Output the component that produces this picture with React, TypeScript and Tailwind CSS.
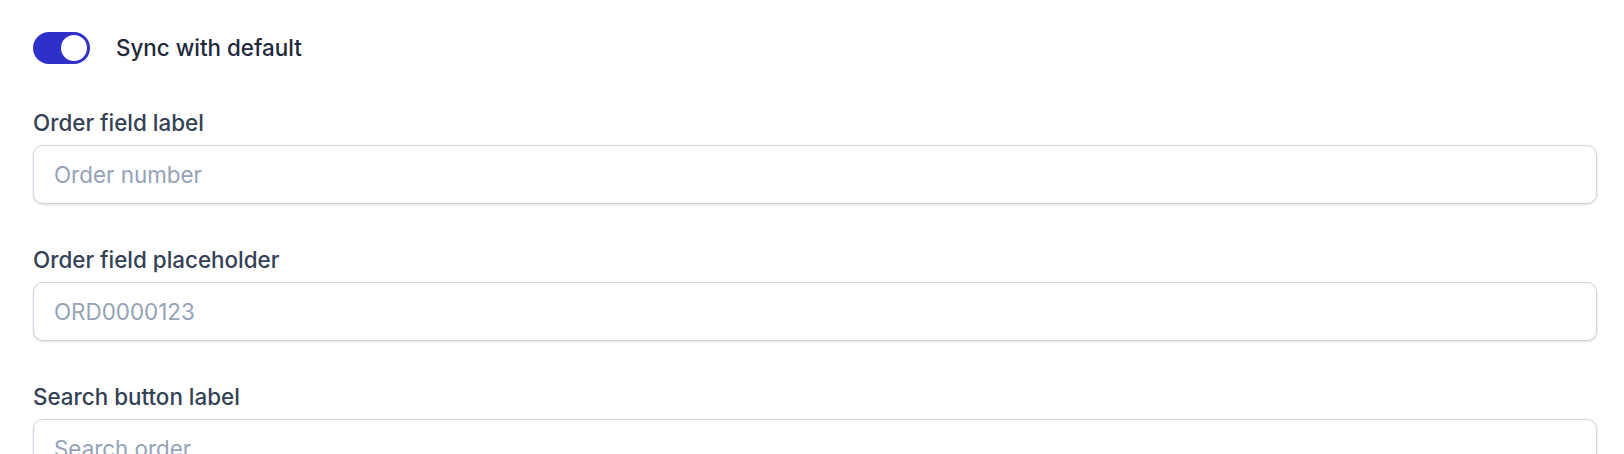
import React from "react";

const fields = [
  { label: "Order field label", placeholder: "Order number" },
  { label: "Order field placeholder", placeholder: "ORD0000123" },
  { label: "Search button label", placeholder: "Search order" },
];

export default function App() {
  return (
    <div
      className="min-h-screen w-full bg-white pl-[33px] pr-[27px] pt-[32px]"
      style={{ fontFamily: "Inter, 'Noto Sans', sans-serif" }}
    >
      <div className="flex items-center gap-[26px]">
        <button
          type="button"
          className="flex h-[32px] w-[57px] items-center justify-end rounded-full bg-[#2f2fc9] px-[3px]"
        >
          <span className="block h-[26px] w-[26px] rounded-full bg-white" />
        </button>
        <span className="text-[22.4px] font-medium leading-[32px] text-[#1e293b]">
          Sync with default
        </span>
      </div>
      <div className="mt-[44px] flex flex-col gap-[41px]">
        {fields.map((f) => (
          <div key={f.label} className="flex flex-col">
            <label className="text-[22.4px] font-medium leading-[30px] text-[#334155]">
              {f.label}
            </label>
            <input
              className="mt-[7px] h-[59px] w-full rounded-[10px] border border-[#cbd5e1] bg-white px-[20px] text-[22.4px] text-[#1e293b] shadow-sm outline-none placeholder:text-[#94a3b8]"
              placeholder={f.placeholder}
            />
          </div>
        ))}
      </div>
    </div>
  );
}
